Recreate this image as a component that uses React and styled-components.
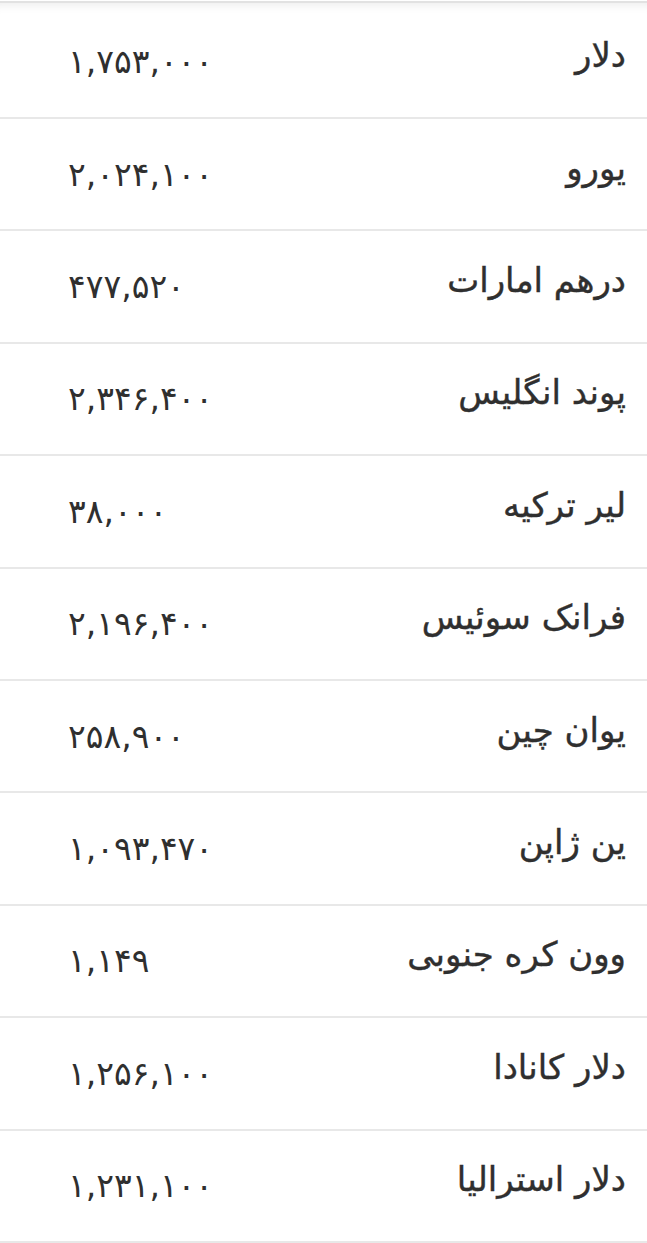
import React from "react";
import styled, { createGlobalStyle } from "styled-components";

const GlobalStyle = createGlobalStyle`
  html, body {
    margin: 0;
    padding: 0;
    background: #fff;
  }
  body {
    font-family: "DejaVu Sans", "Noto Sans", sans-serif;
  }
`;

const List = styled.div`
  width: 647px;
  padding-top: 3.6px;
  background: #fff;
  border-top: 2px solid #e2e2e2;
  box-sizing: border-box;
  box-shadow: inset 0 10px 10px -8px rgba(0, 0, 0, 0.08);
  margin-top: 1px;
`;

const Row = styled.div`
  display: flex;
  direction: rtl;
  align-items: center;
  justify-content: space-between;
  height: 110.4px;
  padding: 0 21px 0 68px;
  border-bottom: 2px solid #e8e8e8;
  color: #2f2f2f;
`;

const Name = styled.span`
  font-size: 34px;
  font-weight: 400;
  line-height: 1;
  padding-bottom: 13px;
  -webkit-text-stroke: 0.4px #2f2f2f;
`;

const Value = styled.span`
  direction: ltr;
  unicode-bidi: isolate;
  font-size: 33px;
  line-height: 1;
  letter-spacing: 2px;
`;

const rates = [
  { name: "دلار", value: "۱,۷۵۳,۰۰۰" },
  { name: "یورو", value: "۲,۰۲۴,۱۰۰" },
  { name: "درهم امارات", value: "۴۷۷,۵۲۰" },
  { name: "پوند انگلیس", value: "۲,۳۴۶,۴۰۰" },
  { name: "لیر ترکیه", value: "۳۸,۰۰۰" },
  { name: "فرانک سوئیس", value: "۲,۱۹۶,۴۰۰" },
  { name: "یوان چین", value: "۲۵۸,۹۰۰" },
  { name: "ین ژاپن", value: "۱,۰۹۳,۴۷۰" },
  { name: "وون کره جنوبی", value: "۱,۱۴۹" },
  { name: "دلار کانادا", value: "۱,۲۵۶,۱۰۰" },
  { name: "دلار استرالیا", value: "۱,۲۳۱,۱۰۰" },
];

const App = () => (
  <>
    <GlobalStyle />
    <List>
      {rates.map(r => (
        <Row key={r.name}>
          <Name>{r.name}</Name>
          <Value>{r.value}</Value>
        </Row>
      ))}
    </List>
  </>
);

export default App;
